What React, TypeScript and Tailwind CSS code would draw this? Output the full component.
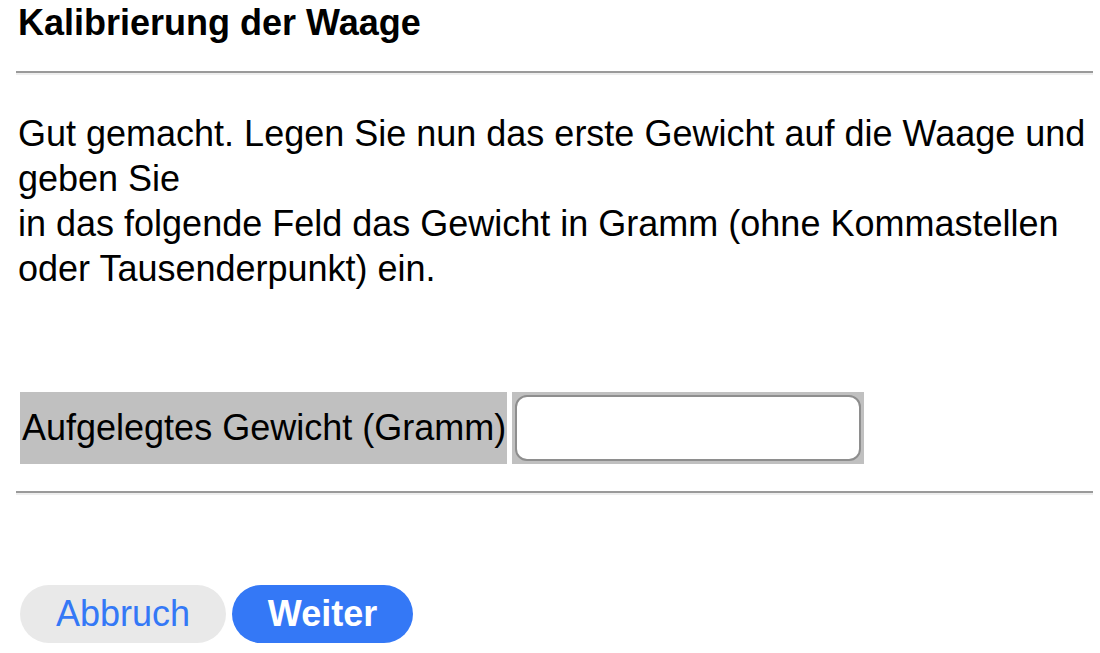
export default function App() {
  return (
    <div className="w-[1100px] h-[653px] bg-white overflow-hidden pl-[16px] pr-[7px] text-black" style={{ fontFamily: '"Liberation Sans", Arial, sans-serif' }}>
      <h1 className="mt-[2px] ml-[2px] text-[36px] leading-[41px] font-bold">Kalibrierung der Waage</h1>
      <div className="mt-[28px] h-[4px] border-t-2 border-t-[#9a9a9a] border-b-2 border-b-[#eeeeee]" />
      <p className="mt-[36px] ml-[2px] text-[36px] leading-[45px]">
        Gut gemacht. Legen Sie nun das erste Gewicht auf die Waage und geben Sie
        <br />
        in das folgende Feld das Gewicht in Gramm (ohne Kommastellen oder Tausenderpunkt) ein.
      </p>
      <div className="mt-[101px] ml-[4px] flex gap-[5px] h-[72px]">
        <div className="w-[487px] bg-[#c0c0c0] flex items-center pl-[2px] text-[36px]">Aufgelegtes Gewicht (Gramm)</div>
        <div className="w-[352px] bg-[#c0c0c0] p-[3px]">
          <input type="text" className="w-full h-full bg-white border-2 border-[#8e8e8e] rounded-[12px] outline-none" />
        </div>
      </div>
      <div className="mt-[27px] h-[4px] border-t-2 border-t-[#9a9a9a] border-b-2 border-b-[#eeeeee]" />
      <div className="mt-[90px] ml-[4px] flex gap-[6px]">
        <button className="w-[206px] h-[58px] rounded-full bg-[#e9e9e9] text-[#3478f6] text-[36px] leading-none">Abbruch</button>
        <button className="w-[181px] h-[58px] rounded-full bg-[#3478f6] text-white font-bold text-[36px] leading-none">Weiter</button>
      </div>
    </div>
  );
}
